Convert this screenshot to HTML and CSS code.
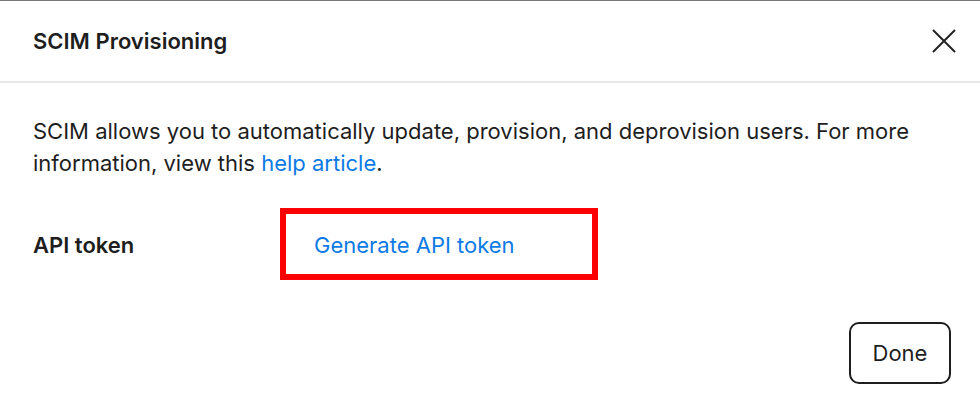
FILE: index.html
```html
<!DOCTYPE html>
<html lang="en">
<head>
  <meta charset="UTF-8">
  <title>SCIM Provisioning</title>
  <meta name="viewport" content="width=device-width, initial-scale=1.0">
  <link rel="stylesheet" href="styles.css">
</head>
<body>

<div class="modal">
  <div class="modal-header">
    <h2>SCIM Provisioning</h2>
    <button class="close-btn" aria-label="Close">
      <svg width="24" height="24" viewBox="0 0 24 24">
        <path d="M1 1L23 23M23 1L1 23" stroke="#222" stroke-width="2" fill="none"/>
      </svg>
    </button>
  </div>

  <div class="modal-body">
    <p class="intro">SCIM allows you to automatically update, provision, and deprovision users. For more information, view this <a href="#">help article</a>.</p>

    <div class="token-row">
      <div class="token-label">API token</div>
      <div class="token-box">
        <a href="#">Generate API token</a>
      </div>
    </div>
  </div>

  <div class="modal-footer">
    <button class="done-btn">Done</button>
  </div>
</div>

</body>
</html>
```

FILE: styles.css
```css
body {
  font-family: Inter, "Noto Sans", sans-serif;
  background-color: #fff;
  margin: 0;
  color: #1e1e1e;
}
.modal {
  border-top: 1px solid #777;
  height: 415px;
  display: flex;
  flex-direction: column;
}
.modal-header {
  height: 80px;
  display: flex;
  align-items: center;
  justify-content: space-between;
  padding: 0 24px 0 33px;
  border-bottom: 2px solid #e6e6e6;
}
.modal-header h2 {
  margin: 0;
  font-size: 22px;
  font-weight: 600;
}
.close-btn {
  background: none;
  border: none;
  padding: 0;
  width: 24px;
  height: 24px;
  cursor: pointer;
}
.modal-body {
  padding: 32px 33px 0 33px;
}
.intro {
  margin: 0;
  font-size: 22px;
  line-height: 32px;
}
a {
  color: #0d7ae5;
  text-decoration: none;
}
.token-row {
  display: flex;
  align-items: center;
  margin-top: 29px;
}
.token-label {
  width: 247px;
  font-size: 22px;
  font-weight: 600;
  padding-top: 2px;
}
.token-box {
  width: 318px;
  height: 72px;
  box-sizing: border-box;
  border: 6px solid #ff0000;
  padding: 2px 0 0 28px;
  display: flex;
  align-items: center;
  font-size: 22px;
}
.modal-footer {
  margin-top: auto;
  display: flex;
  justify-content: flex-end;
  padding: 0 29px 32px 0;
}
.done-btn {
  width: 102px;
  height: 62px;
  border: 2px solid #1e1e1e;
  border-radius: 10px;
  background: #fff;
  font-family: inherit;
  font-size: 22px;
  color: #1e1e1e;
  cursor: pointer;
}
```
